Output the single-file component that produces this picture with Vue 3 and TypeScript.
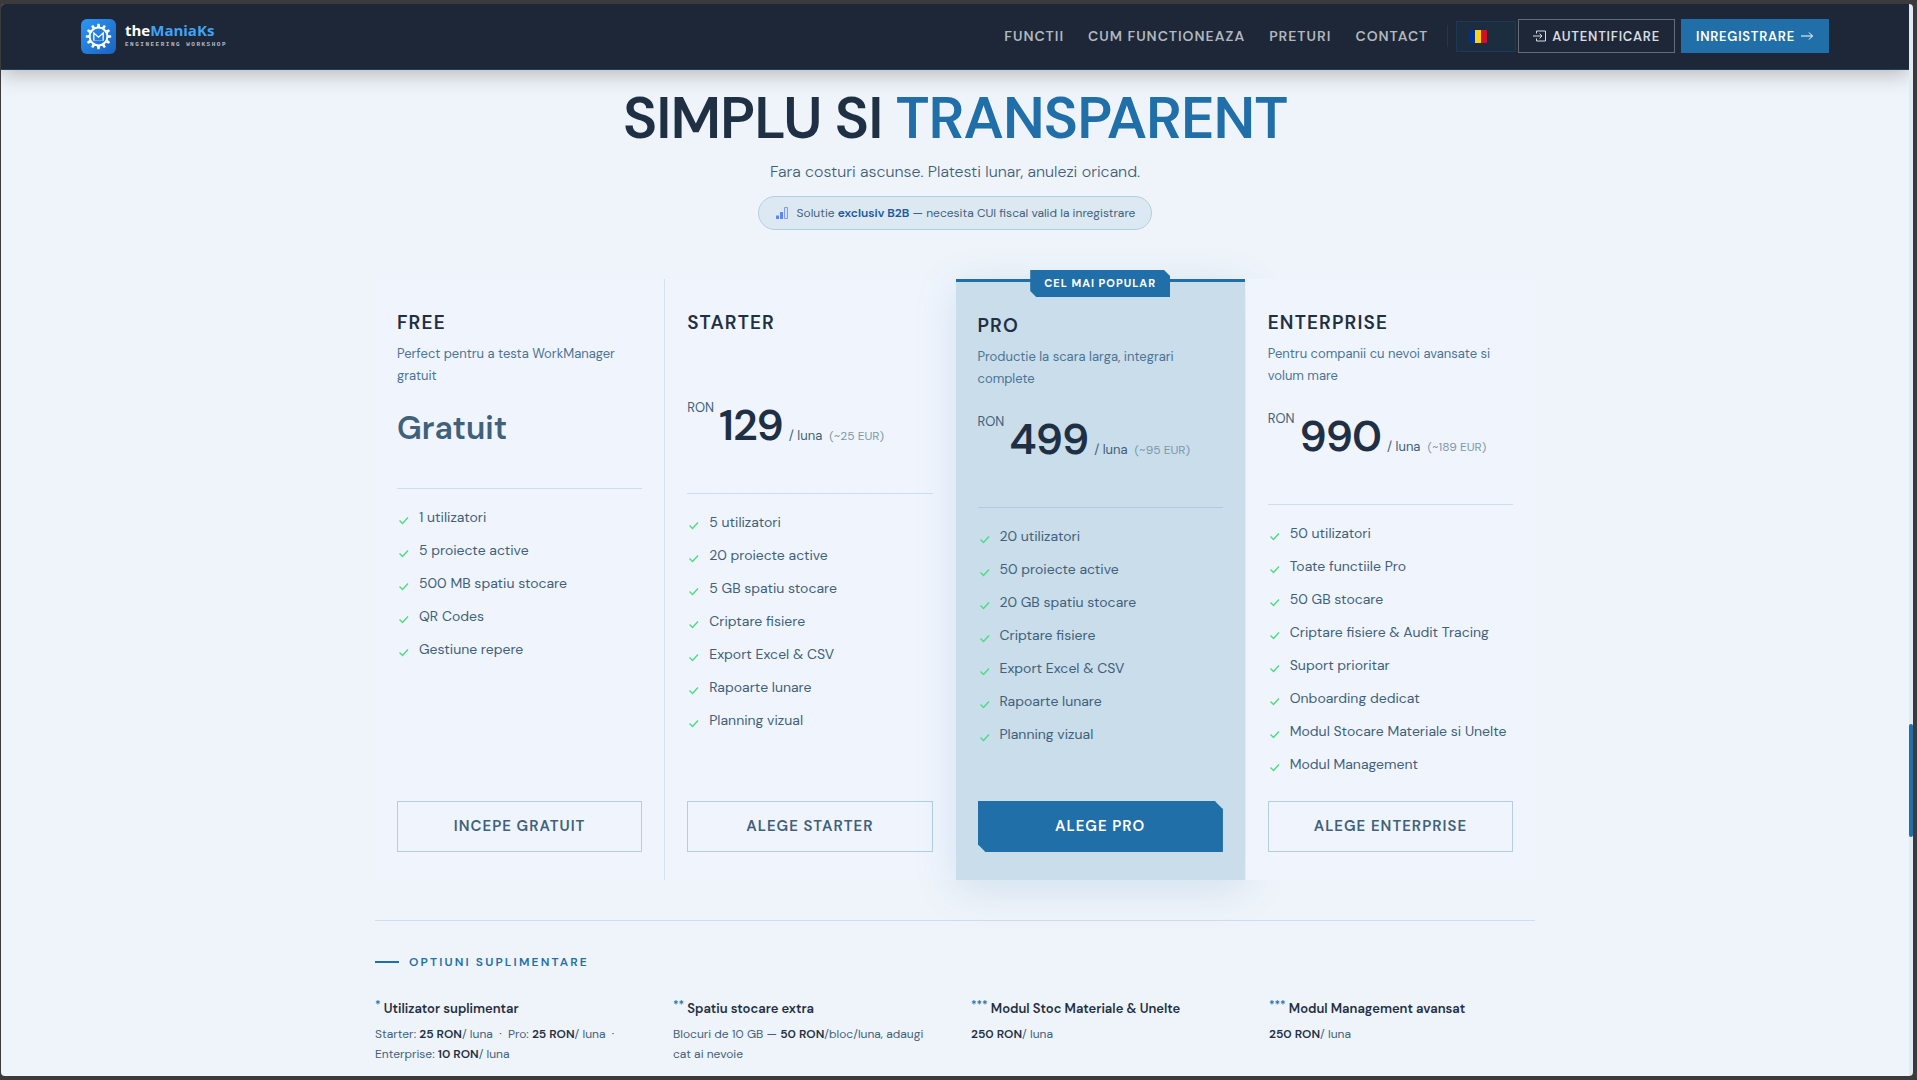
<script setup lang="ts">
interface Plan {
  name: string
  description: string
  price: number | null
  eur: number | null
  features: string[]
  action: string
  popular?: boolean
}

interface TextPart {
  text: string
  strong?: boolean
}

interface Extra {
  mark: string
  title: string
  parts: TextPart[]
}

const links: string[] = ['Functii', 'Cum functioneaza', 'Preturi', 'Contact']

const plans: Plan[] = [
  {
    name: 'Free',
    description: 'Perfect pentru a testa WorkManager gratuit',
    price: null,
    eur: null,
    features: ['1 utilizatori', '5 proiecte active', '500 MB spatiu stocare', 'QR Codes', 'Gestiune repere'],
    action: 'Incepe gratuit',
  },
  {
    name: 'Starter',
    description: '',
    price: 129,
    eur: 25,
    features: [
      '5 utilizatori',
      '20 proiecte active',
      '5 GB spatiu stocare',
      'Criptare fisiere',
      'Export Excel & CSV',
      'Rapoarte lunare',
      'Planning vizual',
    ],
    action: 'Alege Starter',
  },
  {
    name: 'Pro',
    description: 'Productie la scara larga, integrari complete',
    price: 499,
    eur: 95,
    features: [
      '20 utilizatori',
      '50 proiecte active',
      '20 GB spatiu stocare',
      'Criptare fisiere',
      'Export Excel & CSV',
      'Rapoarte lunare',
      'Planning vizual',
    ],
    action: 'Alege Pro',
    popular: true,
  },
  {
    name: 'Enterprise',
    description: 'Pentru companii cu nevoi avansate si volum mare',
    price: 990,
    eur: 189,
    features: [
      '50 utilizatori',
      'Toate functiile Pro',
      '50 GB stocare',
      'Criptare fisiere & Audit Tracing',
      'Suport prioritar',
      'Onboarding dedicat',
      'Modul Stocare Materiale si Unelte',
      'Modul Management',
    ],
    action: 'Alege Enterprise',
  },
]

const extras: Extra[] = [
  {
    mark: '*',
    title: 'Utilizator suplimentar',
    parts: [
      { text: 'Starter: ' },
      { text: '25 RON', strong: true },
      { text: '/ luna \u00a0·\u00a0 Pro: ' },
      { text: '25 RON', strong: true },
      { text: '/ luna \u00a0·\u00a0 Enterprise: ' },
      { text: '10 RON', strong: true },
      { text: '/ luna' },
    ],
  },
  {
    mark: '**',
    title: 'Spatiu stocare extra',
    parts: [
      { text: 'Blocuri de 10 GB — ' },
      { text: '50 RON', strong: true },
      { text: '/bloc/luna, adaugi cat ai nevoie' },
    ],
  },
  {
    mark: '***',
    title: 'Modul Stoc Materiale & Unelte',
    parts: [{ text: '250 RON', strong: true }, { text: '/ luna' }],
  },
  {
    mark: '***',
    title: 'Modul Management avansat',
    parts: [{ text: '250 RON', strong: true }, { text: '/ luna' }],
  },
]

const teeth: number[] = Array.from({ length: 12 }, (_, i) => i * 30)
</script>

<template>
  <div class="window">
    <div class="page">
      <header class="topbar">
        <a class="brand" href="#">
          <svg class="brand-mark" viewBox="0 0 35 35" aria-hidden="true">
            <defs>
              <linearGradient id="brand-fill" x1="0" y1="0" x2="1" y2="1">
                <stop offset="0" stop-color="#2a97f3" />
                <stop offset="1" stop-color="#1d62c0" />
              </linearGradient>
            </defs>
            <rect width="35" height="35" rx="6" fill="url(#brand-fill)" />
            <g fill="#fff">
              <path
                v-for="angle in teeth"
                :key="angle"
                d="M15.9 8 L16.4 4.8 H18.6 L19.1 8 Z"
                :transform="`rotate(${angle} 17.5 17.5)`"
              />
            </g>
            <circle cx="17.5" cy="17.5" r="8.9" fill="none" stroke="#fff" stroke-width="2" />
            <path d="M12.8 21.6 V14 L17.5 18.2 L22.2 14 V21.6" fill="none" stroke="#fff" stroke-width="1.3" />
            <path d="M12.4 21.4 H22.6" stroke="#fff" stroke-width="0.6" opacity="0.6" />
          </svg>
          <span class="brand-text">
            <span class="brand-name">the<span class="brand-accent">ManiaKs</span></span>
            <span class="brand-tag">ENGINEERING WORKSHOP</span>
          </span>
        </a>

        <nav class="nav">
          <a v-for="link in links" :key="link" class="nav-link" href="#">{{ link }}</a>
        </nav>
        <div class="actions">
          <button class="lang" type="button" aria-label="Romana">
            <svg class="flag" viewBox="0 0 18 13" aria-hidden="true">
              <path d="M1 0 H6 V13 H1 Q0 13 0 12 V1 Q0 0 1 0 Z" fill="#00308f" />
              <path d="M6 0 H12 V13 H6 Z" fill="#fcd116" />
              <path d="M12 0 H17 Q18 0 18 1 V12 Q18 13 17 13 H12 Z" fill="#ce1126" />
            </svg>
          </button>
          <button class="btn btn-ghost" type="button">
            <svg class="btn-icon" viewBox="0 0 14 14" fill="none" stroke="currentColor" aria-hidden="true">
              <path d="M3.5 4.5 V2 H12.5 V12 H3.5 V9.5 M0 7 H9 M6.5 4.5 L9 7 L6.5 9.5" />
            </svg>
            Autentificare
          </button>
          <button class="btn btn-solid" type="button">
            Inregistrare
            <svg class="btn-icon" viewBox="0 0 14 14" fill="none" stroke="currentColor" aria-hidden="true">
              <path d="M1 7 H12.5 M9 3.5 L12.5 7 L9 10.5" />
            </svg>
          </button>
        </div>
      </header>

      <main class="content">
        <section class="intro">
          <h1 class="headline">SIMPLU SI <span class="headline-accent">TRANSPARENT</span></h1>
          <p class="subline">Fara costuri ascunse. Platesti lunar, anulezi oricand.</p>
          <p class="notice">
            <svg class="notice-icon" viewBox="0 0 14 14" aria-hidden="true">
              <path d="M1 9.5 H4 V13 H1 Z M5 6 H8 V13 H5 Z" fill="#6284fb" />
              <path d="M9.5 1.5 H12.5 V12.5 H9.5 Z" fill="#d5e0fa" stroke="#7f9bf9" />
            </svg>
            <span>Solutie <strong>exclusiv B2B</strong> — necesita CUI fiscal valid la inregistrare</span>
          </p>
        </section>

        <section class="plans">
          <article v-for="plan in plans" :key="plan.name" class="plan" :class="{ popular: plan.popular }">
            <span v-if="plan.popular" class="ribbon">Cel mai popular</span>
            <h2 class="plan-name">{{ plan.name }}</h2>
            <p class="plan-description">{{ plan.description }}</p>
            <div class="price">
              <template v-if="plan.price !== null">
                <span class="currency">RON</span>
                <span class="amount">{{ plan.price }}</span>
                <span class="period">/ luna</span>
                <span class="euro">(~{{ plan.eur }} EUR)</span>
              </template>
              <span v-else class="gratis">Gratuit</span>
            </div>
            <ul class="features">
              <li v-for="feature in plan.features" :key="feature" class="feature">
                <svg class="check" viewBox="0 0 14 14" fill="none" stroke="currentColor" aria-hidden="true">
                  <path d="M2.5 7.5 L5.5 10.5 L11 4.5" stroke-width="1.4" />
                </svg>
                {{ feature }}
              </li>
            </ul>
            <button class="choose" type="button">{{ plan.action }}</button>
          </article>
        </section>

        <section class="extras">
          <h3 class="extras-label">Optiuni suplimentare</h3>
          <div class="extras-grid">
            <div v-for="extra in extras" :key="extra.title" class="extra">
              <h4 class="extra-title"><sup>{{ extra.mark }}</sup> {{ extra.title }}</h4>
              <p class="extra-text"><template v-for="(part, i) in extra.parts" :key="i"><strong v-if="part.strong">{{ part.text }}</strong><template v-else>{{ part.text }}</template></template></p>
            </div>
          </div>
        </section>
      </main>
    </div>
    <div class="scrollbar" aria-hidden="true">
      <div class="scroll-space"></div>
      <div class="scroll-thumb"></div>
      <div class="scroll-rest"></div>
    </div>
  </div>
</template>

<style>
body {
  margin: 0;
  background: #3b3a3c;
}
</style>

<style scoped>
.window {
  --ink: #1f3044;
  --slate: #3f617b;
  --steel: #4b7497;
  --accent: #216fa8;
  --line: #cbdfee;
  box-sizing: border-box;
  display: flex;
  height: 100vh;
  overflow: hidden;
  border: solid #3b3a3c;
  border-width: 4px 4px 4px 1px;
  font-family: "DM Sans", Inter, "Noto Sans", sans-serif;
  color: var(--ink);
}

.window *,
.window *::before {
  box-sizing: border-box;
}

h1,
h2,
h3,
h4,
p,
ul {
  margin: 0;
  padding: 0;
}

button {
  font-family: inherit;
}

.page {
  flex: 1;
  min-width: 0;
  overflow: hidden;
  border-radius: 4px 0 0 4px;
  background: #eff4fa;
}

.scrollbar {
  display: flex;
  flex-direction: column;
  width: 4px;
  border-radius: 0 4px 4px 0;
  background: #e1ebf4;
}

.scroll-space {
  flex: 720;
}

.scroll-thumb {
  flex: 113;
  border-radius: 2px;
  background: var(--accent);
}

.scroll-rest {
  flex: 239;
}

/* Top bar */
.topbar {
  position: relative;
  display: flex;
  align-items: center;
  height: 66px;
  padding: 0 80px;
  border-bottom: 1px solid #21425f;
  background: #1d2738;
  box-shadow: 0 4px 20px rgba(0, 0, 0, 0.25);
}

.brand {
  display: flex;
  align-items: center;
  gap: 9px;
  margin-right: auto;
  text-decoration: none;
}

.brand-mark {
  width: 35px;
  height: 35px;
}

.brand-text {
  display: flex;
  flex-direction: column;
  padding-bottom: 4px;
}

.brand-name {
  font: 700 15px/20px "Open Sans", "Noto Sans", sans-serif;
  color: #fff;
}

.brand-accent {
  color: #42a2f4;
}

.brand-tag {
  font: 700 6px/10px "Liberation Mono", monospace;
  letter-spacing: 0.25em;
  color: #b4bac3;
}

.nav {
  display: flex;
  align-items: center;
  gap: 24px;
  margin-bottom: 1px;
  padding-right: 19px;
  border-right: 1px solid #1d3a55;
  line-height: 22px;
}

.nav-link {
  font-size: 14px;
  font-weight: 600;
  letter-spacing: 1px;
  text-transform: uppercase;
  text-decoration: none;
  color: #b2b7be;
}

.actions {
  display: flex;
  align-items: center;
  margin-bottom: 1px;
  padding-left: 8px;
}

.lang {
  display: flex;
  align-items: center;
  width: 60px;
  height: 31px;
  margin-right: 2px;
  padding: 0 12px;
  border: 1px solid #1c3a56;
  background: #1d2d40;
}

.flag {
  width: 18px;
  height: 13px;
}

.btn {
  display: flex;
  align-items: center;
  gap: 5px;
  height: 34px;
  padding: 0 15px;
  border: 0;
  font-size: 13px;
  font-weight: 600;
  letter-spacing: 0.06em;
  text-transform: uppercase;
  color: #fff;
}

.btn-icon {
  width: 14px;
  height: 14px;
}

.btn-ghost {
  margin-right: 6px;
  padding: 0 14px;
  border: 1px solid #666d78;
  background: transparent;
  color: #d8dbe0;
}

.btn-solid {
  background: var(--accent);
}

/* Intro */
.content {
  max-width: 1200px;
  margin: 0 auto;
  padding: 18px 20px 0;
}

.intro {
  display: flex;
  flex-direction: column;
  align-items: center;
  text-align: center;
}

.headline {
  font-size: 58px;
  font-weight: 600;
  line-height: 60px;
  letter-spacing: -1px;
}

.headline-accent {
  color: var(--accent);
}

.subline {
  margin-top: 10px;
  font-size: 16px;
  font-weight: 300;
  line-height: 28px;
  color: var(--slate);
}

.notice {
  display: flex;
  align-items: center;
  gap: 8px;
  height: 34px;
  margin-top: 10px;
  padding: 0 16px;
  border: 1px solid #b1cfe4;
  border-radius: 17px;
  background: #dde9f2;
  font-size: 12px;
  color: var(--slate);
}

.notice strong {
  font-weight: 600;
  color: #1c58a0;
}

.notice-icon {
  width: 14px;
  height: 14px;
}

/* Plans */
.plans {
  display: grid;
  grid-template-columns: repeat(4, 1fr);
  gap: 1px;
  margin-top: 49px;
  background: #f0f5fd;
}

.plan {
  position: relative;
  display: flex;
  flex-direction: column;
  padding: 28px 22px;
}

.plan:first-child {
  margin-right: -1px;
  border-right: 1px solid #d3e2ef;
}

.popular {
  border-top: 3px solid var(--accent);
  background: #c9ddea;
  box-shadow: 0 8px 40px rgba(33, 111, 168, 0.15);
}

.plan:last-child {
  z-index: 1;
  background: #f0f5fd;
}

.ribbon {
  position: absolute;
  top: -12px;
  left: 50%;
  padding: 0 14px;
  transform: translateX(-50%);
  clip-path: polygon(0 0, calc(100% - 6px) 0, 100% 6px, 100% 100%, 6px 100%, 0 calc(100% - 6px));
  background: var(--accent);
  font-size: 11px;
  font-weight: 700;
  line-height: 27px;
  letter-spacing: 1px;
  text-transform: uppercase;
  white-space: nowrap;
  color: #fff;
}

.plan-name {
  font-size: 19px;
  font-weight: 600;
  line-height: 32px;
  letter-spacing: 0.06em;
  text-transform: uppercase;
}

.plan-description {
  min-height: 33px;
  margin-top: 4px;
  font-size: 13px;
  line-height: 22px;
  color: var(--steel);
}

.price {
  display: flex;
  align-items: baseline;
  margin-top: 21px;
  padding-bottom: 40px;
  border-bottom: 1px solid var(--line);
}

.popular .price {
  border-color: #b0cbde;
}

.currency {
  align-self: flex-start;
  margin-right: 5px;
  font-size: 13px;
  line-height: 22px;
  color: var(--slate);
}

.amount {
  font-size: 43px;
  font-weight: 600;
  line-height: 56px;
  letter-spacing: -1px;
}

.period {
  margin-left: 6px;
  font-size: 13px;
  color: var(--slate);
}

.euro {
  margin-left: 7px;
  font-size: 12px;
  color: #7d98ac;
}

.gratis {
  font-size: 32px;
  font-weight: 600;
  line-height: 40px;
  color: var(--slate);
}

.features {
  display: flex;
  flex-direction: column;
  gap: 10px;
  padding: 17px 0 25px;
  list-style: none;
}

.feature {
  display: flex;
  gap: 8px;
  font-size: 14px;
  line-height: 23px;
  color: var(--slate);
}

.check {
  width: 14px;
  height: 14px;
  margin-top: 7px;
  color: #4bdc80;
}

.choose {
  height: 51px;
  margin-top: auto;
  padding-bottom: 3px;
  border: 1px solid #b1cfe4;
  background: transparent;
  font-size: 15px;
  font-weight: 600;
  letter-spacing: 1px;
  text-transform: uppercase;
  color: var(--slate);
}

.popular .choose {
  border-color: var(--accent);
  clip-path: polygon(0 0, calc(100% - 8px) 0, 100% 8px, 100% 100%, 8px 100%, 0 calc(100% - 8px));
  background: var(--accent);
  color: #fff;
}

/* Extra options */
.extras {
  margin-top: 40px;
  padding-top: 30px;
  border-top: 1px solid var(--line);
}

.extras-label {
  display: flex;
  align-items: center;
  gap: 10px;
  font-size: 12px;
  font-weight: 600;
  line-height: 22px;
  letter-spacing: 0.18em;
  text-transform: uppercase;
  color: var(--accent);
}

.extras-label::before {
  width: 24px;
  height: 2px;
  background: var(--accent);
  content: "";
}

.extras-grid {
  display: grid;
  grid-template-columns: repeat(4, 1fr);
  gap: 32px;
  margin-top: 25px;
}

.extra-title {
  font-size: 13px;
  font-weight: 600;
  line-height: 22px;
}

.extra-title sup {
  font-size: 11px;
  line-height: 1;
  color: var(--accent);
}

.extra-text {
  margin-top: 4px;
  font-size: 12px;
  line-height: 20px;
  color: var(--slate);
}

.extra-text strong {
  font-weight: 600;
  color: var(--ink);
}
</style>
